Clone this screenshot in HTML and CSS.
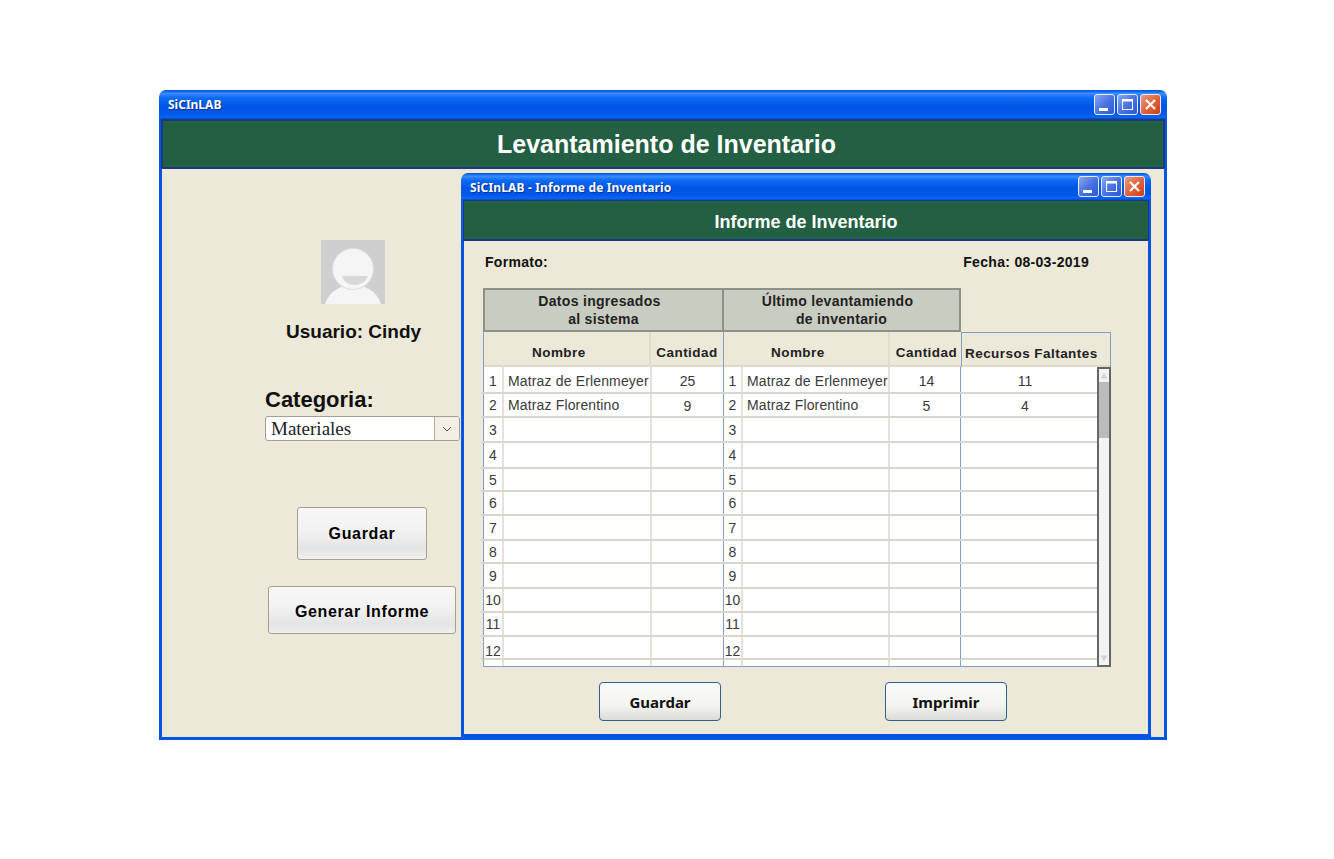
FILE: index.html
```html
<!DOCTYPE html>
<html lang="es">
<head>
<meta charset="utf-8">
<title>SiCInLAB</title>
<link rel="stylesheet" href="styles.css">
</head>
<body>
<div class="window main">
  <div class="titlebar tall">
    <span class="title">SiCInLAB</span>
    <div class="controls">
      <span class="ctl"><svg viewBox="0 0 21 21"><rect x="5" y="14" width="9" height="3" fill="#fff"/></svg></span>
      <span class="ctl"><svg viewBox="0 0 21 21"><rect x="5.5" y="5.5" width="10" height="10" fill="none" stroke="#fff"/><rect x="5" y="5" width="11" height="2.5" fill="#fff"/></svg></span>
      <span class="ctl close"><svg viewBox="0 0 21 21"><path d="M6 6l9 9M15 6l-9 9" stroke="#fff" stroke-width="2.2" fill="none"/></svg></span>
    </div>
  </div>
  <div class="frame">
    <div class="banner big">Levantamiento de Inventario</div>
    <div class="side">
      <svg class="avatar" viewBox="0 0 64 64">
        <rect width="64" height="64" fill="#cfcfcf"/>
        <path d="M4 64C8 51 20 45 32 45C44 45 56 51 60 64Z" fill="#f5f5f5"/>
        <circle cx="32" cy="29" r="20.5" fill="#f5f5f5" stroke="#dedede"/>
        <path d="M21 36H47C45 42 39 45 34 45C28 45 23 42 21 36Z" fill="#d9d9d9"/>
      </svg>
      <div class="user">Usuario: Cindy</div>
      <div class="cat">Categoria:</div>
      <div class="select">
        <span class="select-text">Materiales</span>
        <span class="select-btn"><svg viewBox="0 0 10 6" width="10" height="6"><path d="M1 1l4 4 4-4" fill="none" stroke="#555"/></svg></span>
      </div>
      <button class="btn btn-save">Guardar</button>
      <button class="btn btn-report">Generar Informe</button>
    </div>

    <div class="window inner">
      <div class="titlebar">
        <span class="title">SiCInLAB - Informe de Inventario</span>
        <div class="controls">
          <span class="ctl"><svg viewBox="0 0 21 21"><rect x="5" y="14" width="9" height="3" fill="#fff"/></svg></span>
          <span class="ctl"><svg viewBox="0 0 21 21"><rect x="5.5" y="5.5" width="10" height="10" fill="none" stroke="#fff"/><rect x="5" y="5" width="11" height="2.5" fill="#fff"/></svg></span>
          <span class="ctl close"><svg viewBox="0 0 21 21"><path d="M6 6l9 9M15 6l-9 9" stroke="#fff" stroke-width="2.2" fill="none"/></svg></span>
        </div>
      </div>
      <div class="frame inner-frame">
        <div class="banner small">Informe de Inventario</div>
        <div class="report">
          <div class="info"><span>Formato:</span><span class="fecha">Fecha: 08-03-2019</span></div>
          <div class="groups">
            <div class="group g1"><span class="shift">Datos ingresados</span><span>al sistema</span></div>
            <div class="group g2"><span class="shift">Último levantamiendo</span><span>de inventario</span></div>
          </div>
          <div class="thead">
            <div class="th th-name">Nombre</div>
            <div class="th th-qty">Cantidad</div>
            <div class="th th-name second">Nombre</div>
            <div class="th th-qty2">Cantidad</div>
            <div class="th th-res">Recursos Faltantes</div>
          </div>
          <div class="tbody">
            <div class="rows">
              <div class="row h27"><div class="c num">1</div><div class="c name">Matraz de Erlenmeyer</div><div class="c qty">25</div><div class="c num n2">1</div><div class="c name">Matraz de Erlenmeyer</div><div class="c qty q2">14</div><div class="c res">11</div></div>
              <div class="row h24"><div class="c num">2</div><div class="c name">Matraz Florentino</div><div class="c qty">9</div><div class="c num n2">2</div><div class="c name">Matraz Florentino</div><div class="c qty q2">5</div><div class="c res">4</div></div>
              <div class="row h25"><div class="c num">3</div><div class="c name"></div><div class="c qty"></div><div class="c num n2">3</div><div class="c name"></div><div class="c qty q2"></div><div class="c res"></div></div>
              <div class="row h26"><div class="c num">4</div><div class="c name"></div><div class="c qty"></div><div class="c num n2">4</div><div class="c name"></div><div class="c qty q2"></div><div class="c res"></div></div>
              <div class="row h23"><div class="c num">5</div><div class="c name"></div><div class="c qty"></div><div class="c num n2">5</div><div class="c name"></div><div class="c qty q2"></div><div class="c res"></div></div>
              <div class="row h24"><div class="c num">6</div><div class="c name"></div><div class="c qty"></div><div class="c num n2">6</div><div class="c name"></div><div class="c qty q2"></div><div class="c res"></div></div>
              <div class="row h25"><div class="c num">7</div><div class="c name"></div><div class="c qty"></div><div class="c num n2">7</div><div class="c name"></div><div class="c qty q2"></div><div class="c res"></div></div>
              <div class="row h23"><div class="c num">8</div><div class="c name"></div><div class="c qty"></div><div class="c num n2">8</div><div class="c name"></div><div class="c qty q2"></div><div class="c res"></div></div>
              <div class="row h25"><div class="c num">9</div><div class="c name"></div><div class="c qty"></div><div class="c num n2">9</div><div class="c name"></div><div class="c qty q2"></div><div class="c res"></div></div>
              <div class="row h24"><div class="c num">10</div><div class="c name"></div><div class="c qty"></div><div class="c num n2">10</div><div class="c name"></div><div class="c qty q2"></div><div class="c res"></div></div>
              <div class="row h24"><div class="c num">11</div><div class="c name"></div><div class="c qty"></div><div class="c num n2">11</div><div class="c name"></div><div class="c qty q2"></div><div class="c res"></div></div>
              <div class="row h23 low"><div class="c num">12</div><div class="c name"></div><div class="c qty"></div><div class="c num n2">12</div><div class="c name"></div><div class="c qty q2"></div><div class="c res"></div></div>
              <div class="row h6 last"><div class="c num"></div><div class="c name"></div><div class="c qty"></div><div class="c num n2"></div><div class="c name"></div><div class="c qty q2"></div><div class="c res"></div></div>
            </div>
            <div class="scrollbar">
              <div class="sb-btn"><svg viewBox="0 0 8 7" width="8" height="7"><path d="M4 0.5L7.5 6.5H0.5Z" fill="#d4d4d4"/></svg></div>
              <div class="sb-thumb"></div>
              <div class="sb-track"></div>
              <div class="sb-btn end"><svg viewBox="0 0 8 7" width="8" height="7"><path d="M4 6.5L7.5 0.5H0.5Z" fill="#d4d4d4"/></svg></div>
            </div>
          </div>
          <div class="actions">
            <button class="btn2 b-guardar">Guardar</button>
            <button class="btn2">Imprimir</button>
          </div>
        </div>
      </div>
    </div>
  </div>
</div>
</body>
</html>
```
FILE: styles.css
```css
* { box-sizing: border-box; }
html, body { margin: 0; padding: 0; background: #fff; }
body { padding: 90px 0 0 159px; height: 859px; overflow: hidden; font-family: "Liberation Sans", Arial, sans-serif; }

.window { display: flex; flex-direction: column; }
.main { width: 1008px; height: 650px; }

.titlebar {
  flex: none; height: 27px; display: flex; align-items: center; justify-content: space-between;
  padding: 0 6px 0 9px; border-radius: 7px 7px 0 0;
  background: linear-gradient(#0a55d8 0, #0a60ee 4%, #3a8dff 12%, #0f6cf6 26%, #0055e5 55%, #0058ea 82%, #0a66f4 94%, #0048c4 100%);
}
.tall { height: 29px; }
.title { font: bold 12px "Noto Sans", sans-serif; color: #fff; text-shadow: 1px 1px 1px #0b2f90; white-space: nowrap; }
.inner .title { letter-spacing: .16px; padding-top: 2px; }
.controls { display: flex; gap: 2px; }
.ctl {
  width: 21px; height: 21px; border: 1px solid #e4ecfb; border-radius: 3px; display: block;
  background: linear-gradient(135deg, #8aa8f2 0, #4a74e0 50%, #2c58d4 100%);
}
.ctl svg { display: block; width: 21px; height: 21px; margin: -1px; }
.close { background: linear-gradient(135deg, #eb9a80 0, #e2643c 50%, #cf3d12 100%); }

.frame { flex: 1; position: relative; border: 3px solid #0055e5; border-top: 0; background: #ece9d8; display: flex; flex-direction: column; }
.banner {
  flex: none; margin: 0 -1px; background: #225f43; border: 2px solid #1c3a80; color: #fff;
  font-weight: bold; display: flex; align-items: center; justify-content: center;
}
.big { height: 50px; font-size: 25px; padding-left: 7px; }
.small { height: 41px; font-size: 18px; border-width: 1px 1px 2px; padding-top: 5px; }

.side { flex: 1; display: flex; flex-direction: column; align-items: flex-start; padding: 71px 0 0 103px; }
.avatar { width: 64px; height: 64px; display: block; margin-left: 56px; }
.user { font-size: 19px; font-weight: bold; color: #111; margin: 17px 0 0 21px; line-height: 22px; }
.cat { font-size: 22px; font-weight: bold; color: #111; margin-top: 44px; line-height: 26px; letter-spacing: 0; }
.select { width: 195px; height: 25px; margin-top: 3px; display: flex; background: #fff; border: 1px solid #a89f8c; border-radius: 3px; }
.select-text { flex: 1; font: 19px "Liberation Serif", serif; color: #222; padding-left: 5px; line-height: 24px; }
.select-btn { width: 25px; border-left: 1px solid #b5ad9c; background: #f1efe6; display: flex; align-items: center; justify-content: center; border-radius: 0 2px 2px 0; }
.btn {
  display: block; border: 1px solid #a89f8c; border-radius: 3px; padding: 0; color: #000;
  background: linear-gradient(#f8f8f8 0, #f2f2f2 45%, #e4e4e4 80%, #f0f0f0 100%);
  font: bold 16px "Liberation Sans", sans-serif; letter-spacing: .65px;
}
.btn-save { width: 130px; height: 53px; margin: 66px 0 0 32px; }
.btn-report { width: 188px; height: 48px; margin: 26px 0 0 3px; padding-top: 3px; }

.inner { position: absolute; left: 299px; top: 54px; width: 690px; height: 564px; }
.inner-frame { border-bottom: 3px solid #0055e5; }
.report { flex: 1; padding: 0 0 0 19px; }
.info { height: 47px; display: flex; justify-content: space-between; align-items: center; padding: 0 59px 6px 2px; width: 665px; font-size: 14px; font-weight: bold; color: #111; letter-spacing: .3px; }
.groups { display: flex; height: 44px; }
.group {
  display: flex; flex-direction: column; align-items: center; justify-content: center;
  background: #c9ccc1; border: 2px solid #8e918a; font-size: 14px; font-weight: bold; color: #222; line-height: 18px; letter-spacing: .3px; padding-bottom: 1px;
}
.g1 { width: 241px; }
.g2 { width: 237px; border-left: 0; }
.shift { margin-right: 8px; }

.thead { display: flex; height: 35px; width: 628px; background: #ece9d8; box-shadow: inset 0 -2px 0 #dcd9c8; font-size: 13.5px; font-weight: bold; color: #222; letter-spacing: .45px; }
.th { display: flex; align-items: center; padding-top: 6px; }
.th-name { width: 168px; padding-left: 48px; border-left: 1px solid #7fa0c4; border-right: 2px solid #e0ddcf; }
.th-name.second { width: 167px; padding-left: 47px; }
.th-qty { width: 72px; justify-content: center; }
.th-qty2 { width: 71px; justify-content: center; padding-left: 2px; }
.th-res { flex: 1; padding-left: 3px; border-left: 1px solid #7fa0c4; border-top: 1px solid #7fa0c4; border-right: 1px solid #7fa0c4; }

.tbody { display: flex; width: 628px; height: 300px; align-items: stretch; }
.rows { width: 614px; background: #fff; border-bottom: 1px solid #7fa0c4; font-size: 14px; color: #3a3a3a; }
.row { display: grid; grid-template-columns: 19px 148px 73px 18px 147px 72px 137px; margin-left: -2px; padding-left: 2px; border-bottom: 2px solid #d9d7cd; }
.h27 { height: 27px; } .h26 { height: 26px; } .h25 { height: 25px; } .h24 { height: 24px; } .h23 { height: 23px; } .h6 { height: 6px; }
.c { display: flex; align-items: center; }
.last { border-bottom: 0; }
.num { justify-content: center; border-left: 1px solid #7fa0c4; }
.name { border-left: 2px solid #e4e2da; padding-left: 4px; white-space: nowrap; letter-spacing: .15px; overflow: hidden; }
.qty { border-left: 2px solid #e4e2da; justify-content: center; padding-top: 1px; }
.q2 { padding-left: 3px; }
.res { justify-content: center; border-left: 1px solid #7fa0c4; padding-right: 8px; padding-top: 1px; }
.h27 .c { padding-top: 2px; }
.low .num { padding-top: 6px; }

.scrollbar { width: 15px; border: 2px solid #666; display: flex; flex-direction: column; background: #f3f3f3; }
.sb-btn { height: 13px; display: flex; align-items: center; justify-content: center; flex: none; }
.sb-thumb { height: 56px; background: #bbb; flex: none; }
.sb-track { flex: 1; }

.actions { display: flex; gap: 164px; padding: 15px 0 0 116px; }
.btn2 {
  width: 122px; height: 39px; padding: 0; border: 1px solid #2f6090; border-radius: 4px; color: #111;
  background: linear-gradient(#fbfbf9 0, #f4f4f0 60%, #dcdcd6 100%);
  font: bold 15px "Noto Sans", sans-serif;
}
```
